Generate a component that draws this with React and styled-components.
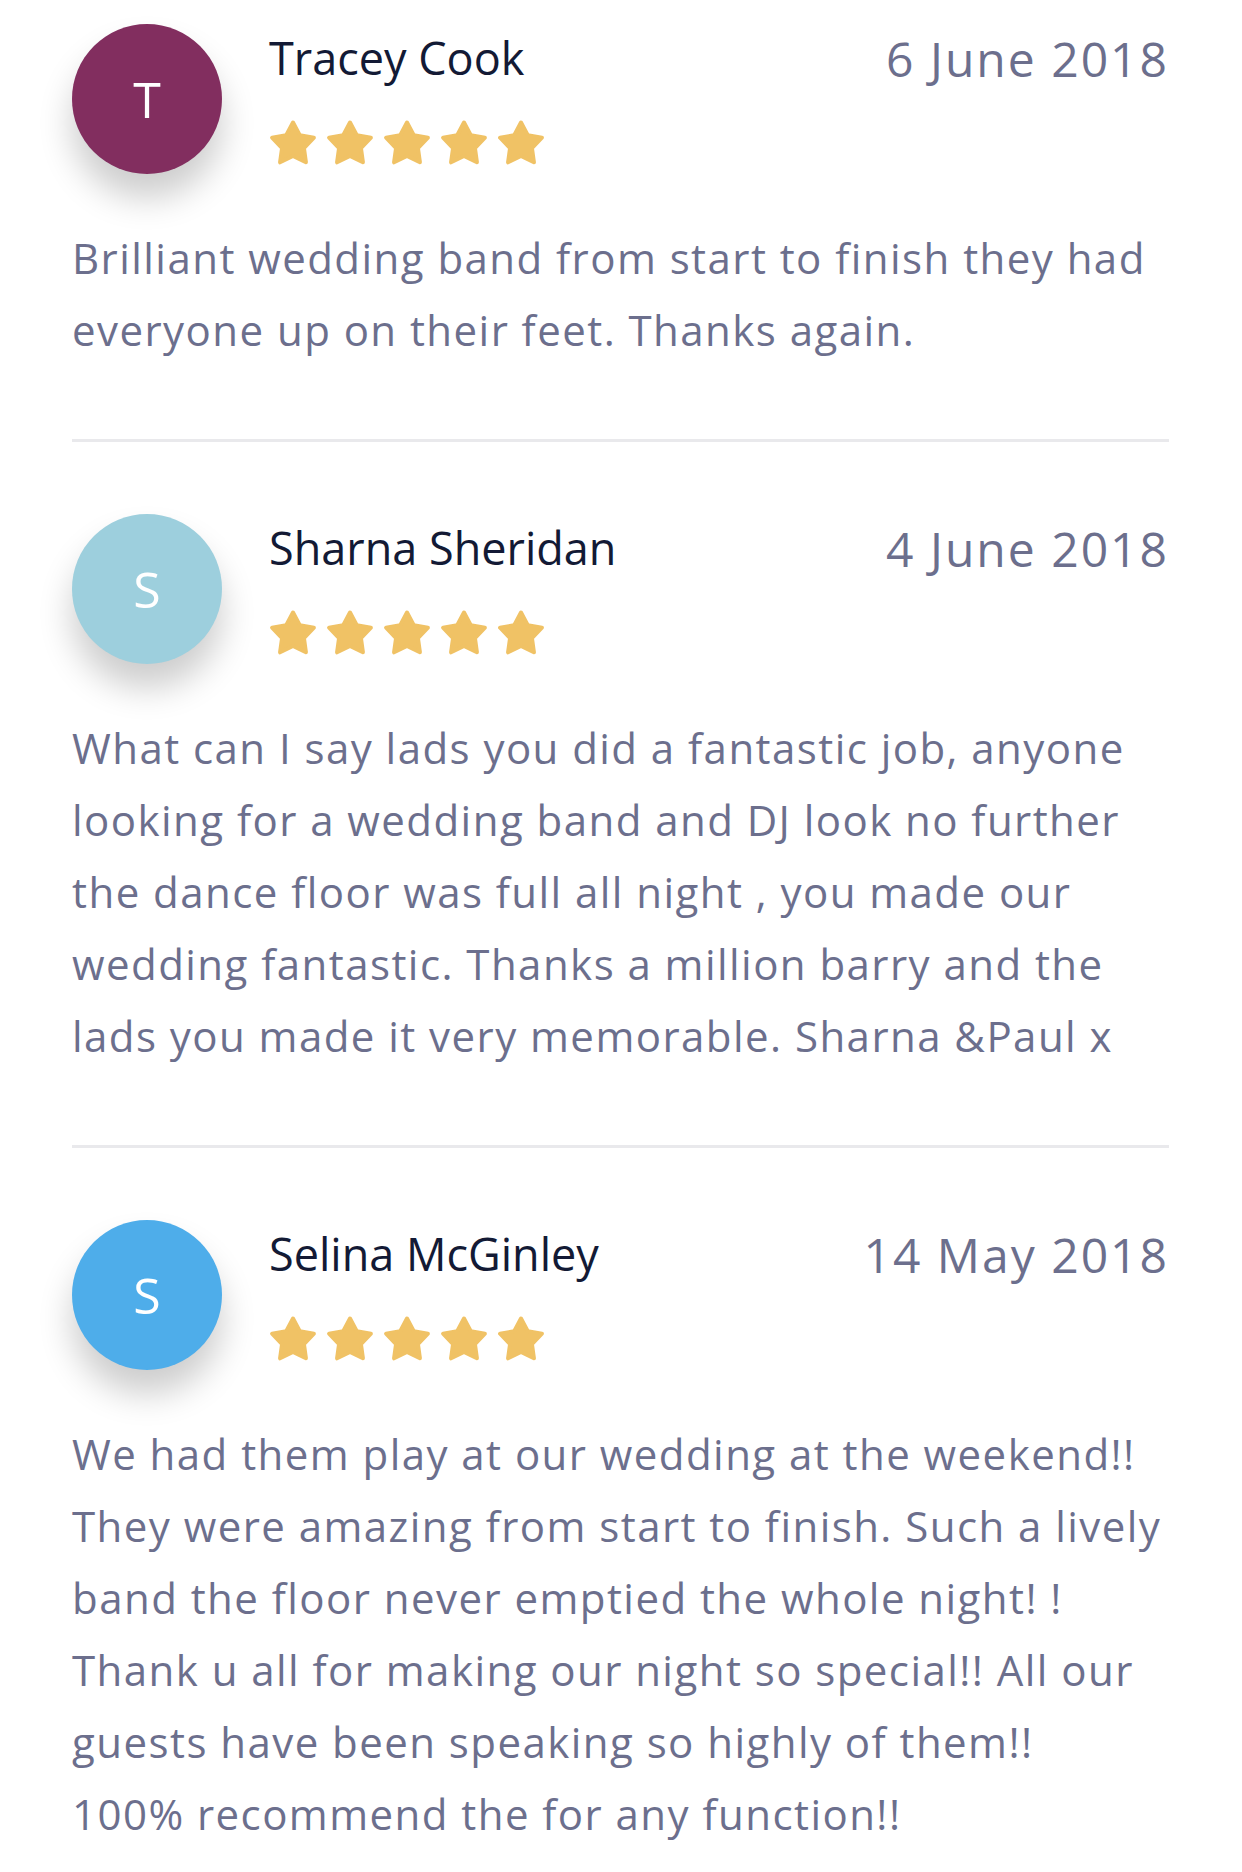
import React from "react";
import styled, { createGlobalStyle } from "styled-components";

const GlobalStyle = createGlobalStyle`
  body {
    margin: 0;
    background: #ffffff;
    font-family: "Open Sans", "Lato", sans-serif;
  }
`;

const Page = styled.div`
  padding: 24px 73px 0 72px;
`;

const Review = styled.article`
  padding: 0 0 73px;
  border-bottom: 3px solid #e9e9ec;
  margin-bottom: 72px;

  &:last-child {
    border-bottom: none;
    margin-bottom: 0;
  }
`;

const Header = styled.div`
  display: flex;
  align-items: flex-start;
`;

const Avatar = styled.div`
  flex: 0 0 150px;
  width: 150px;
  height: 150px;
  border-radius: 50%;
  background: ${(p) => p.color};
  box-shadow: 0 24px 34px rgba(0, 0, 0, 0.2);
  display: flex;
  align-items: center;
  justify-content: center;
  color: #ffffff;
  font-size: 50px;
  font-weight: 400;
`;

const Meta = styled.div`
  flex: 1;
  margin-left: 47px;
  padding-top: 7px;
`;

const Name = styled.h3`
  margin: 0;
  font-size: 45px;
  line-height: 1.2;
  font-weight: 500;
  color: #131a35;
`;

const Stars = styled.div`
  display: flex;
  gap: 9px;
  margin-top: 34px;
`;

const DateText = styled.span`
  padding-top: 6px;
  font-size: 48px;
  line-height: 1.2;
  letter-spacing: 2px;
  color: #6c6f8d;
`;

const Body = styled.p`
  margin: 48px 0 0;
  font-size: 42px;
  line-height: 72px;
  letter-spacing: 1.45px;
  color: #6c6f8d;
`;

const starPoints = (() => {
  const pts = [];
  for (let k = 0; k < 10; k++) {
    const a = (-90 + k * 36) * (Math.PI / 180);
    const r = k % 2 === 0 ? 22 : 11.5;
    pts.push(`${(24 + r * Math.cos(a)).toFixed(2)},${(25.5 + r * Math.sin(a)).toFixed(2)}`);
  }
  return pts.join(" ");
})();

function Star() {
  return (
    <svg width="48" height="48" viewBox="0 0 48 48">
      <polygon
        points={starPoints}
        fill="#f0c265"
        stroke="#f0c265"
        strokeWidth="4"
        strokeLinejoin="round"
      />
    </svg>
  );
}

const reviews = [
  {
    initial: "T",
    color: "#822e5f",
    name: "Tracey Cook",
    date: "6 June 2018",
    lines: [
      "Brilliant wedding band from start to finish they had",
      "everyone up on their feet. Thanks again.",
    ],
  },
  {
    initial: "S",
    color: "#9dcfdd",
    name: "Sharna Sheridan",
    date: "4 June 2018",
    lines: [
      "What can I say lads you did a fantastic job, anyone",
      "looking for a wedding band and DJ look no further",
      "the dance floor was full all night , you made our",
      "wedding fantastic. Thanks a million barry and the",
      "lads you made it very memorable. Sharna &Paul x",
    ],
  },
  {
    initial: "S",
    color: "#4eadea",
    name: "Selina McGinley",
    date: "14 May 2018",
    lines: [
      "We had them play at our wedding at the weekend!!",
      "They were amazing from start to finish. Such a lively",
      "band the floor never emptied the whole night! !",
      "Thank u all for making our night so special!! All our",
      "guests have been speaking so highly of them!!",
      "100% recommend the for any function!!",
    ],
  },
];

export default function App() {
  return (
    <>
      <GlobalStyle />
      <Page>
        {reviews.map((r) => (
          <Review key={r.name}>
            <Header>
              <Avatar color={r.color}>{r.initial}</Avatar>
              <Meta>
                <Name>{r.name}</Name>
                <Stars>
                  {[0, 1, 2, 3, 4].map((i) => (
                    <Star key={i} />
                  ))}
                </Stars>
              </Meta>
              <DateText>{r.date}</DateText>
            </Header>
            <Body>
              {r.lines.map((line, i) => (
                <React.Fragment key={i}>
                  {line}
                  {i < r.lines.length - 1 && <br />}
                </React.Fragment>
              ))}
            </Body>
          </Review>
        ))}
      </Page>
    </>
  );
}
